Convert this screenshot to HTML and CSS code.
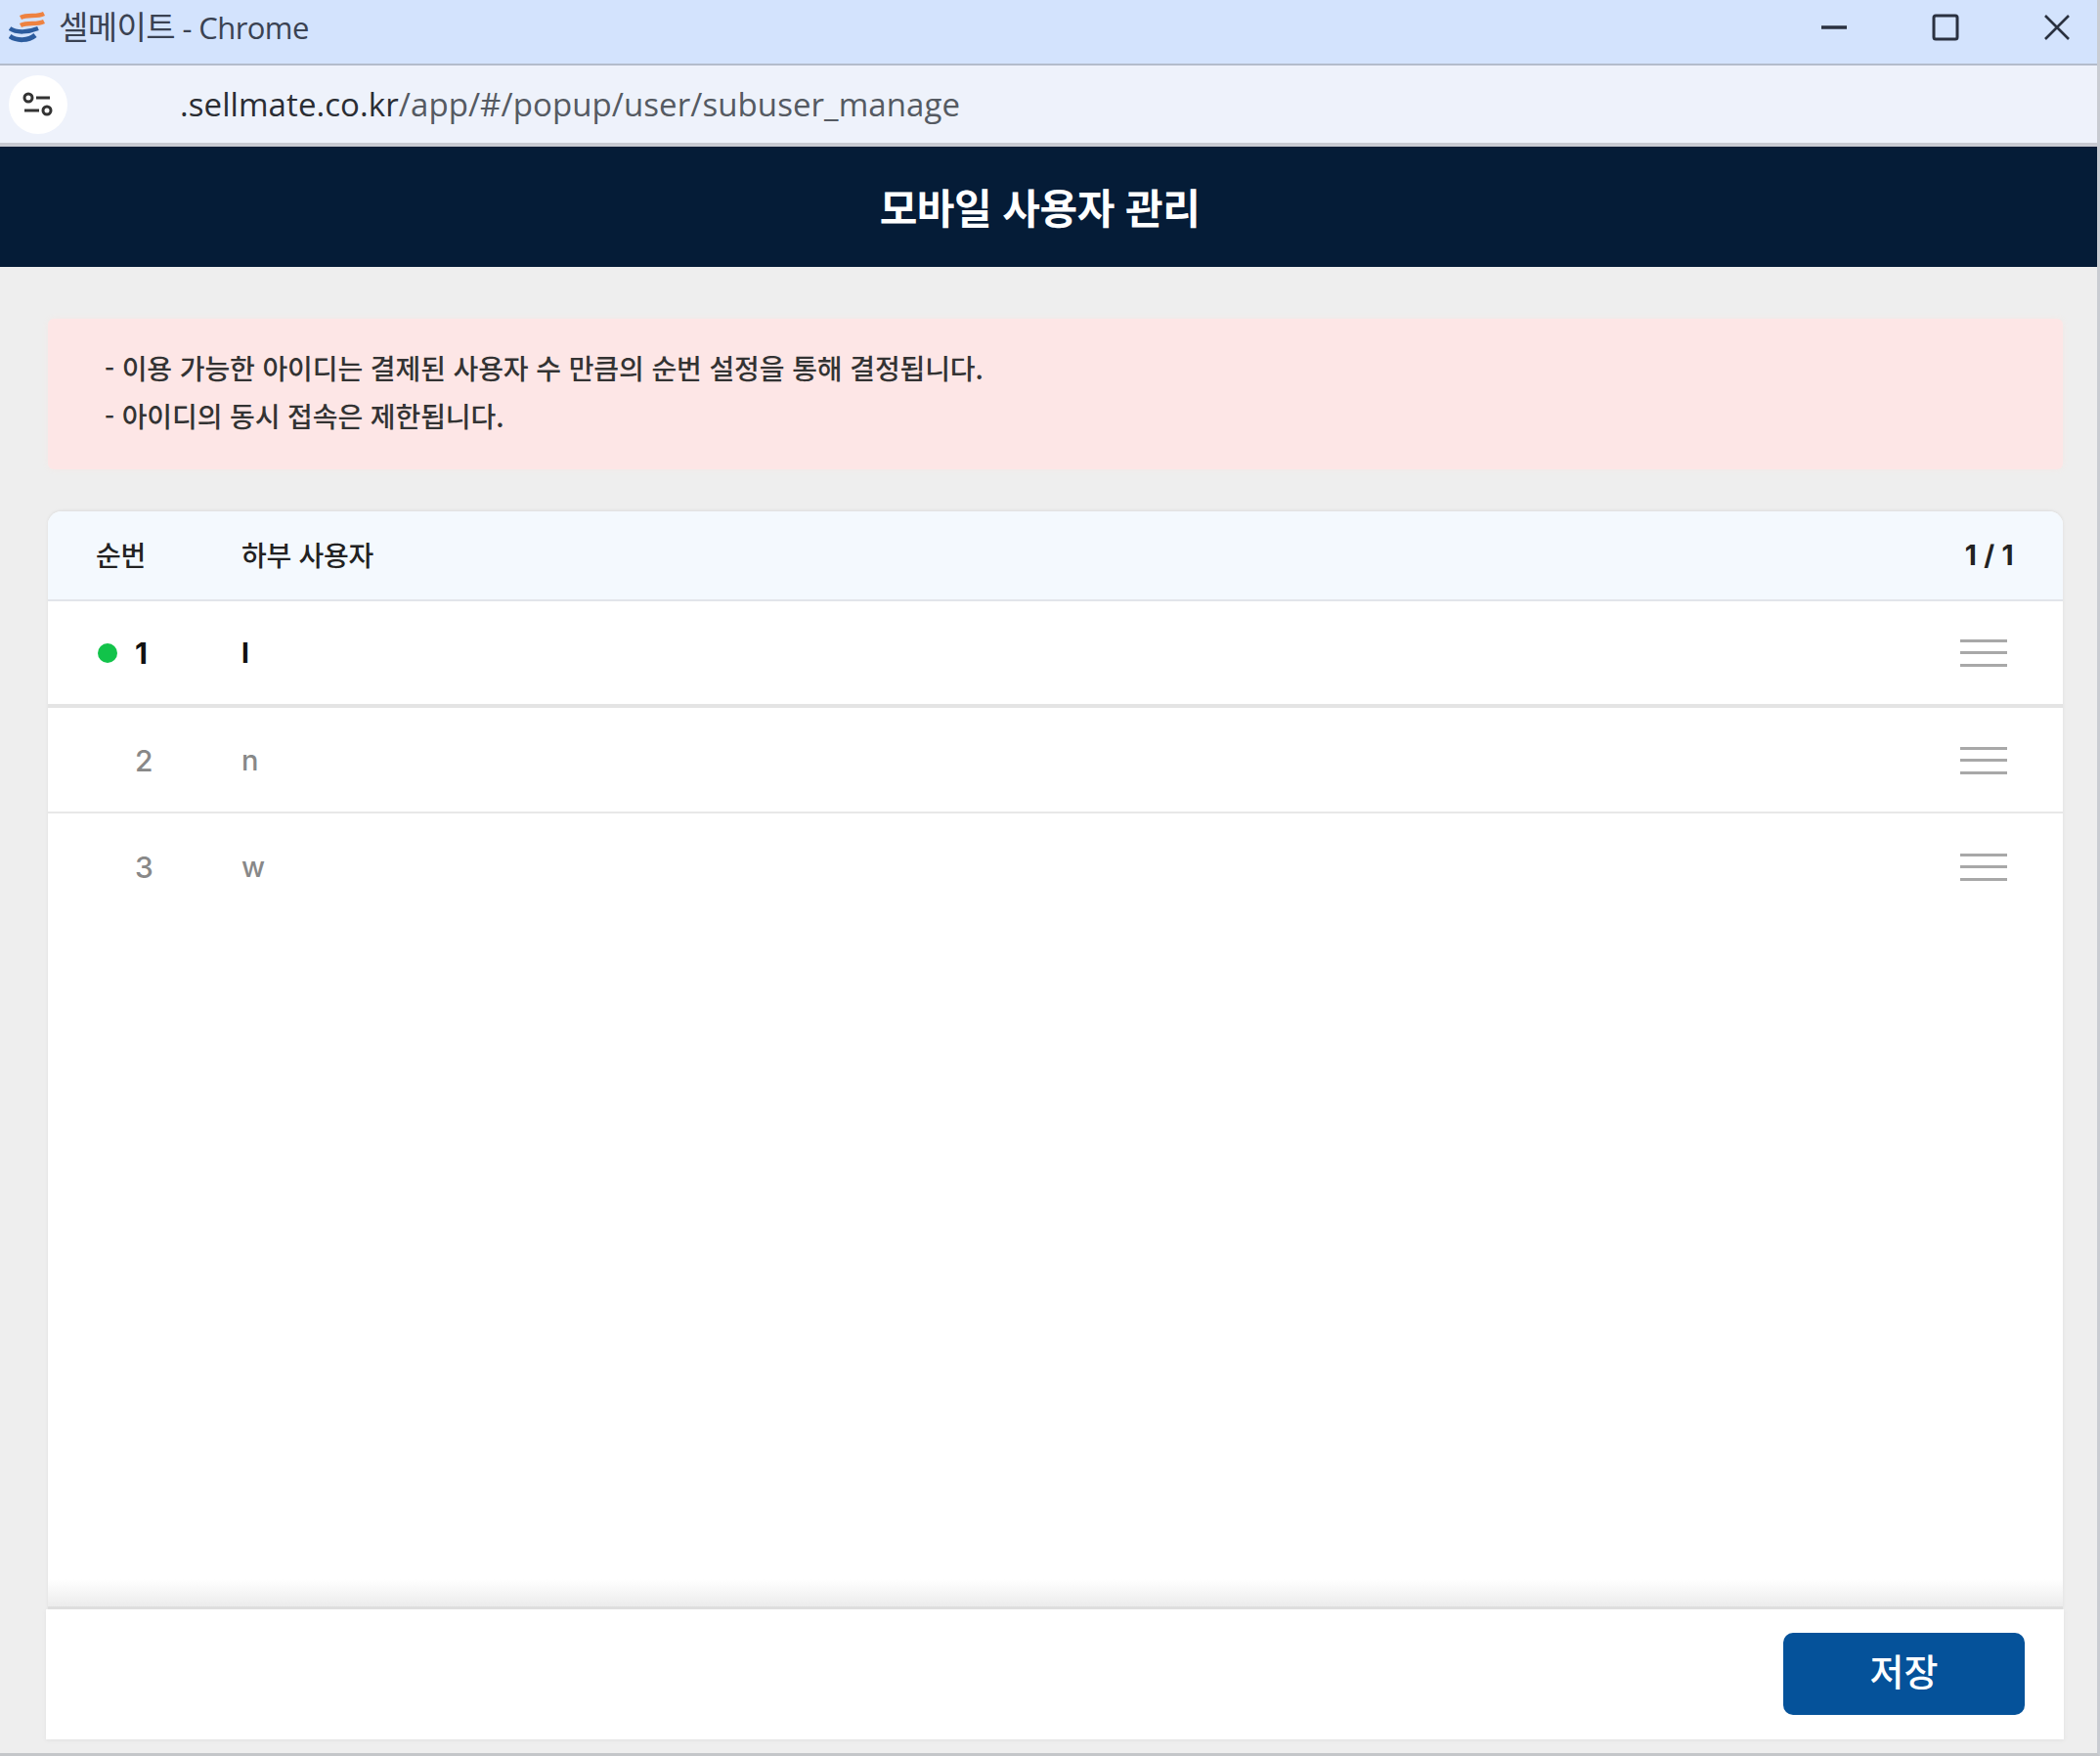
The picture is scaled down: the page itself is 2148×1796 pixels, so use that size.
FILE: index.html
```html
<!DOCTYPE html>
<html lang="ko">
<head>
<meta charset="utf-8">
<title>모바일 사용자 관리</title>
<link rel="stylesheet" href="styles.css">
</head>
<body>
<div class="window">
  <header class="titlebar">
    <svg class="logo" viewBox="0 0 38 32" width="38" height="32">
      <path d="M12 6 C20 2 28 6 36 2" fill="none" stroke="#ee8240" stroke-width="4.5"/>
      <path d="M12 14 C20 10 28 14 36 10" fill="none" stroke="#ee8240" stroke-width="4.5"/>
      <path d="M1 17 C8 22 20 21 30 17" fill="none" stroke="#2c5c9e" stroke-width="4.5"/>
      <path d="M1 25 C8 30 20 30 27 24" fill="none" stroke="#2c5c9e" stroke-width="5"/>
    </svg>
    <span class="wintitle"><span class="wintitle-ko">셀메이트</span> - Chrome</span>
    <div class="winctrls">
      <svg class="ctl" viewBox="0 0 28 28" width="28" height="28"><path d="M1 14H27" stroke="#2a3140" stroke-width="3.5"/></svg>
      <svg class="ctl" viewBox="0 0 28 28" width="28" height="28"><rect x="2" y="2" width="24" height="24" rx="2" fill="none" stroke="#2a3140" stroke-width="3"/></svg>
      <svg class="ctl" viewBox="0 0 28 28" width="28" height="28"><path d="M2 2L26 26M26 2L2 26" stroke="#2a3140" stroke-width="2.6"/></svg>
    </div>
  </header>
  <div class="addressbar">
    <div class="siteicon">
      <svg viewBox="0 0 32 26" width="32" height="26">
        <circle cx="6" cy="6" r="4" fill="none" stroke="#333" stroke-width="3"/>
        <path d="M14 6H28" stroke="#333" stroke-width="3"/>
        <path d="M2 19H17" stroke="#333" stroke-width="3"/>
        <circle cx="25" cy="19" r="4" fill="none" stroke="#333" stroke-width="3"/>
      </svg>
    </div>
    <span class="url"><span class="host">.sellmate.co.kr</span>/app/#/popup/user/subuser_manage</span>
  </div>
  <div class="page">
    <h1 class="pagehead">모바일 사용자 관리</h1>
    <main class="content">
      <section class="notice">
        <p class="notice-line">- 이용 가능한 아이디는 결제된 사용자 수 만큼의 순번 설정을 통해 결정됩니다.</p>
        <p class="notice-line">- 아이디의 동시 접속은 제한됩니다.</p>
      </section>
      <section class="card">
        <div class="row head">
          <span class="col-num">순번</span>
          <span class="col-user">하부 사용자</span>
          <span class="count">1 / 1</span>
        </div>
        <div class="row item active thick">
          <span class="col-num"><i class="dot"></i><b class="num">1</b></span>
          <span class="col-user">l</span>
          <span class="handle"><i></i><i></i><i></i></span>
        </div>
        <div class="row item">
          <span class="col-num"><b class="num">2</b></span>
          <span class="col-user">n</span>
          <span class="handle"><i></i><i></i><i></i></span>
        </div>
        <div class="row item last">
          <span class="col-num"><b class="num">3</b></span>
          <span class="col-user">w</span>
          <span class="handle"><i></i><i></i><i></i></span>
        </div>
        <div class="card-fill"></div>
      </section>
      <footer class="actions">
        <button class="save" type="button">저장</button>
      </footer>
    </main>
  </div>
</div>
</body>
</html>
```
FILE: styles.css
```css
* { box-sizing: border-box; }
html, body { margin: 0; height: 100%; }
body { font-family: "Noto Sans CJK KR", "Noto Sans", sans-serif; color: #222; background: #eee; }
.window { height: 1796px; display: flex; flex-direction: column; border-right: 3px solid #c9ccd2; border-bottom: 3px solid #c4c6c9; }
.titlebar { height: 67px; flex: none; background: #d3e3fd; border-bottom: 2px solid #b4bccb; display: flex; align-items: center; padding: 0 27px 0 9px; }
.logo { margin-top: -10px; }
.wintitle { margin-left: 13px; margin-top: -13px; font-size: 31px; letter-spacing: -0.6px; color: #3a4252; font-family: "Open Sans", "Noto Sans CJK KR", sans-serif; }
.wintitle-ko { font-size: 33px; }
.winctrls { margin-left: auto; display: flex; gap: 86px; margin-top: -9px; }
.addressbar { height: 83px; flex: none; background: #eef2fb; border-bottom: 4px solid #c8cad2; display: flex; align-items: center; }
.siteicon { width: 60px; height: 60px; margin-left: 9px; border-radius: 50%; background: #fff; display: flex; align-items: center; justify-content: center; }
.url { margin-left: 115px; font-family: "Open Sans", sans-serif; font-size: 33px; letter-spacing: 0.08px; color: #555a62; }
.host { color: #2a2d33; }
.page { flex: 1; min-height: 0; display: flex; flex-direction: column; }
.pagehead { margin: 0; height: 123px; flex: none; background: #051c37; color: #fff; font-size: 42px; font-weight: 700; display: flex; align-items: center; justify-content: center; letter-spacing: -0.5px; padding: 0 18px 2px 0; }
.content { flex: 1; min-height: 0; display: flex; flex-direction: column; padding: 53px 35px 14px 49px; }
.notice { height: 154px; flex: none; background: #fde6e6; border-radius: 6px; padding: 26px 58px 0; box-shadow: 0 0 6px #f3e9e6; }
.notice-line { margin: 0; font-size: 28px; line-height: 49px; font-weight: 500; color: #333; letter-spacing: -0.1px; }
.card { flex: 1; min-height: 0; margin-top: 43px; display: flex; flex-direction: column; background: #fff; border-radius: 14px 14px 0 0; box-shadow: 0 -1px 3px #dcdcdc; overflow: hidden; }
.row { flex: none; display: flex; align-items: center; padding: 0 57px 0 49px; }
.head { height: 92px; background: #f4f9fe; border-bottom: 2px solid #e2e5ea; font-size: 28px; font-weight: 500; color: #222; letter-spacing: -0.3px; padding-right: 50px; }
.head > span { margin-top: -3px; }
.head > .count { margin-top: -1px; }
.item { height: 108px; border-bottom: 2px solid #e8e8e8; font-size: 29px; color: #888; padding-top: 1px; }
.thick { height: 109px; border-bottom: 4px solid #e4e4e4; color: #111; padding-top: 0; }
.item.last { border-bottom: 0; }
.col-num { width: 149px; flex: none; display: flex; align-items: center; }
.item .col-user { font-family: "Inter", sans-serif; font-weight: 500; }
.dot { width: 20px; height: 20px; border-radius: 50%; background: #12c34a; margin-left: 2px; margin-right: 18px; }
.num { font-family: "Inter", sans-serif; font-weight: 500; font-size: 30px; margin-left: 40px; }
.active .num { font-weight: 700; margin-left: 0; }
.active .col-user { font-weight: 700; }
.count { margin-left: auto; font-family: "Inter", sans-serif; font-weight: 700; font-size: 28px; letter-spacing: 0.4px; }
.handle { margin-left: auto; width: 48px; display: flex; flex-direction: column; gap: 9.5px; }
.handle i { height: 3px; background: #a8a8a8; }
.card-fill { flex: 1; background: linear-gradient(to bottom, #fff calc(100% - 28px), #ececec); border-bottom: 3px solid #dedede; }
.actions { height: 133px; flex: none; margin: 0 -1px 0 -2px; background: #fff; display: flex; align-items: center; justify-content: flex-end; padding: 0 40px 2px 0; box-shadow: 0 1px 4px #e0e0e0; }
.save { width: 247px; height: 84px; border: 0; border-radius: 10px; background: #05529a; color: #fff; font-family: inherit; font-size: 38px; font-weight: 500; padding: 0 0 8px; }
```
